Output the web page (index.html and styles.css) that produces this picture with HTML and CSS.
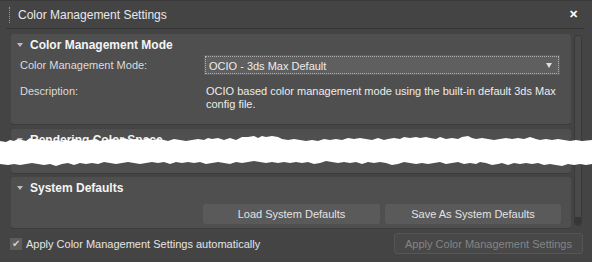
FILE: index.html
```html
<!DOCTYPE html>
<html lang="en">
<head>
  <meta charset="UTF-8" />
  <title>Color Management Settings</title>
  <link rel="stylesheet" href="styles.css">
</head>
<body>

<div class="ventana">
  <!-- Barra de titulo -->
  <div class="titulo">
    <span class="grip"></span>
    <span class="titulo-texto">Color Management Settings</span>
    <span class="cerrar">&#x2715;</span>
  </div>

  <div class="cuerpo">
    <div class="rollouts">
      <section class="rollout r-modo">
        <div class="rollout-head"><span class="tri"></span>Color Management Mode</div>
        <div class="fila">
          <span class="etiqueta">Color Management Mode:</span>
          <div class="combo">OCIO - 3ds Max Default<span class="flecha"></span></div>
        </div>
        <div class="fila fila-desc">
          <span class="etiqueta">Description:</span>
          <p class="desc">OCIO based color management mode using the built-in default 3ds Max config file.</p>
        </div>
      </section>

      <section class="rollout r-render">
        <div class="rollout-head"><span class="tri"></span>Rendering Color Space</div>
      </section>

      <section class="rollout r-sistema">
        <div class="rollout-head"><span class="tri"></span>System Defaults</div>
        <div class="botones">
          <button class="boton">Load System Defaults</button>
          <button class="boton">Save As System Defaults</button>
        </div>
      </section>
    </div>
    <div class="scroll"><div class="scroll-thumb"></div></div>
  </div>

  <div class="pie">
    <label class="check"><span class="caja">&#x2714;</span>Apply Color Management Settings automatically</label>
    <button class="boton boton-off" disabled>Apply Color Management Settings</button>
  </div>
</div>

<!-- corte de papel -->
<svg class="corte" width="592" height="40" viewBox="0 0 592 40">
  <polygon fill="#fff" points="0,9 6,10 10,8 14,9 18,7 22,8 26,9 30,6 34,8 38,7 42,9 46,8 52,9 58,8 62,10 66,8 70,9 74,7 78,8 84,9 90,8 96,7 100,9 106,8 112,7 118,8 124,6 130,8 136,7 142,8 148,6 152,8 158,7 164,8 168,9 174,7 180,8 186,9 192,8 198,7 204,8 208,6 212,7 218,6 224,8 230,6 236,8 242,5 248,5 254,4 258,6 262,4 266,5 272,4 278,5 282,7 288,8 294,7 300,8 306,9 312,8 318,9 324,7 330,8 336,7 342,8 348,6 354,7 360,6 366,7 372,8 378,6 384,8 388,7 394,6 400,7 404,5 410,6 416,5 420,6 426,5 430,6 436,7 440,5 446,7 452,6 458,7 462,5 468,4 472,6 476,7 482,6 488,7 494,8 500,7 506,6 512,7 518,6 524,7 530,5 536,7 540,8 546,7 552,8 558,7 564,8 570,9 576,8 582,9 592,8 592,32 586,33 580,32 574,33 568,32 562,34 556,33 550,32 544,33 538,31 532,32 526,31 520,32 514,31 508,33 502,31 498,32 492,33 486,31 480,30 476,32 470,31 464,32 458,30 452,31 446,32 440,30 434,31 428,32 422,31 416,32 410,31 404,30 398,32 392,33 386,31 380,30 374,31 368,30 362,32 356,30 350,31 344,30 338,31 332,30 326,29 320,31 314,32 308,30 302,31 296,30 290,31 284,30 278,31 272,30 266,31 260,30 254,29 248,30 242,31 236,30 230,32 224,31 218,30 212,31 206,32 200,30 194,31 188,30 182,31 176,30 170,32 164,30 158,31 152,30 146,31 140,32 134,31 128,30 122,31 116,32 110,31 104,30 98,32 92,31 86,32 80,31 74,33 68,31 62,32 56,34 50,32 44,33 38,32 32,31 26,32 20,33 14,32 8,33 0,32"/>
</svg>

</body>
</html>
```

FILE: styles.css
```css
body {
  margin: 0;
  background: #444444;
  font-family: 'Liberation Sans', Arial, sans-serif;
  font-size: 11px;
  color: #dcdcdc;
  width: 592px;
  height: 262px;
  overflow: hidden;
  position: relative;
}

.ventana {
  display: flex;
  flex-direction: column;
  height: 262px;
  box-sizing: border-box;
  border-top: 1px solid #3a3a3a;
}

/* titulo */
.titulo {
  display: flex;
  align-items: center;
  height: 27px;
  margin: 0 8px 0 6px;
  border-bottom: 1px solid #363636;
}

.grip {
  width: 1px;
  height: 16px;
  margin-left: 3px;
  border-left: 1px dotted #9a9a9a;
}

.titulo-texto {
  margin-left: 7px;
  font-size: 12px;
  color: #e8e8e8;
}

.cerrar {
  margin-left: auto;
  margin-right: 6px;
  font-size: 11px;
  font-weight: bold;
  color: #fff;
}

/* cuerpo */
.cuerpo {
  display: flex;
  padding: 5px 10px 0 11px;
  gap: 3px;
}

.rollouts {
  flex: 1;
  display: flex;
  flex-direction: column;
  gap: 5px;
}

.rollout {
  background: #4f4f4f;
  border-radius: 3px;
  box-shadow: 0 1px 0 #3c3c3c;
}

.rollout-head {
  display: flex;
  align-items: center;
  height: 21px;
  padding-left: 6px;
  font-size: 12px;
  font-weight: bold;
  color: #f4f4f4;
}

.tri {
  width: 0;
  height: 0;
  border-left: 3px solid transparent;
  border-right: 3px solid transparent;
  border-top: 4px solid #bcbcbc;
  margin-right: 7px;
}

.r-modo {
  height: 90px;
}

.r-render {
  height: 44px;
}

.r-sistema {
  height: 51px;
  margin-top: -1px;
}

.fila {
  display: flex;
  align-items: center;
  padding-left: 9px;
}

.fila:first-of-type {
  margin-top: 4px;
}

.etiqueta {
  width: 184px;
}

.combo {
  position: relative;
  width: 356px;
  height: 20px;
  line-height: 20px;
  box-sizing: border-box;
  padding-left: 4px;
  background: #5f5f5f;
  border: 1px solid #5f5f5f;
  outline: 1px dotted #b0b0b0;
  outline-offset: -2px;
  color: #ececec;
}

.flecha {
  position: absolute;
  right: 7px;
  top: 7px;
  border-left: 3px solid transparent;
  border-right: 3px solid transparent;
  border-top: 5px solid #e0e0e0;
}

.fila-desc {
  align-items: flex-start;
  margin-top: 10px;
}

.desc {
  margin: 0;
  width: 352px;
  line-height: 13px;
  padding-left: 2px;
  color: #ececec;
}

.botones {
  display: flex;
  gap: 5px;
  padding-left: 192px;
  margin-top: 6px;
}

.boton {
  font-family: 'Liberation Sans', Arial, sans-serif;
  font-size: 11px;
  color: #e2e2e2;
  background: #5a5a5a;
  border: none;
  border-radius: 3px;
  height: 20px;
  width: 176px;
  padding: 0;
}

.botones .boton:first-child {
  width: 177px;
}

/* scroll */
.scroll {
  width: 8px;
  height: 191px;
  margin-top: 1px;
  box-sizing: border-box;
  background: #4a4a4a;
  border: 1px solid #393939;
  border-radius: 3px;
  display: flex;
  align-items: flex-end;
}

.scroll-thumb {
  width: 6px;
  height: 8px;
  border-radius: 0 0 3px 3px;
  background: #363636;
}

/* pie */
.pie {
  display: flex;
  align-items: center;
  padding: 5px 9px 0 10px;
}

.check {
  display: flex;
  align-items: center;
  gap: 4px;
  color: #e4e4e4;
}

.caja {
  width: 12px;
  height: 12px;
  background: #5c5c5c;
  color: #cfcfcf;
  font-size: 10px;
  line-height: 12px;
  text-align: center;
}

.boton-off {
  margin-left: auto;
  width: 189px;
  height: 21px;
  background: #484848;
  border: 1px solid #555;
  color: #858585;
}

.corte {
  position: absolute;
  left: 0;
  top: 132px;
}
```
